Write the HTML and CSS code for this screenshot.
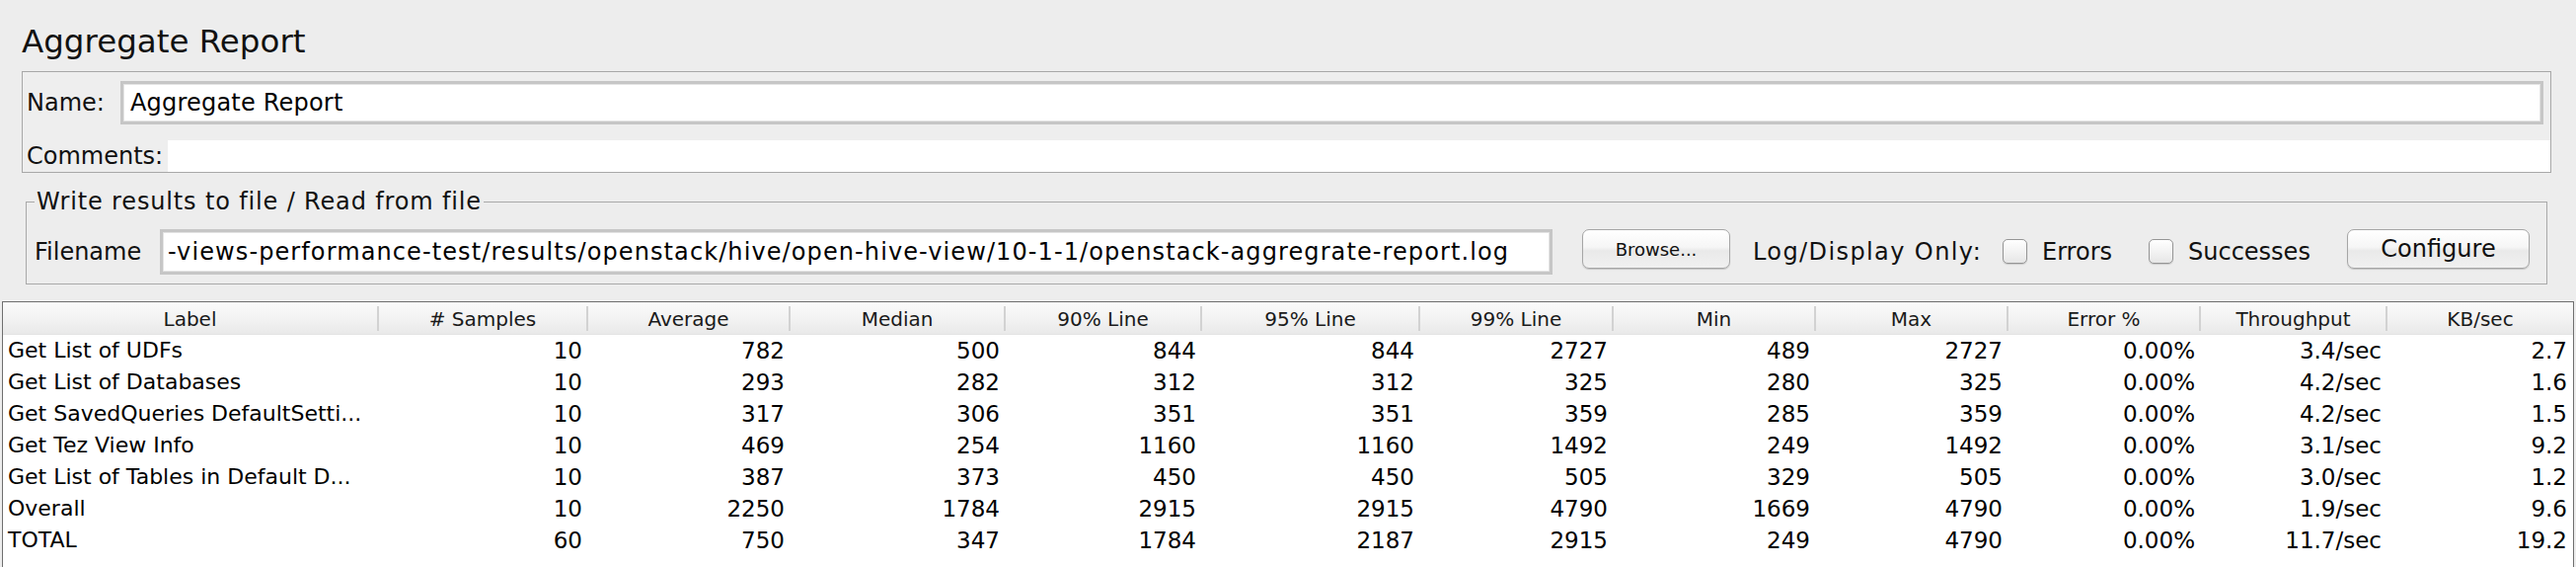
FILE: index.html
```html
<!DOCTYPE html>
<html>
<head>
<meta charset="utf-8">
<title>Aggregate Report</title>
<link rel="stylesheet" href="styles.css">
</head>
<body>
<div class="page">
  <h1 class="title">Aggregate Report</h1>

  <div class="name-panel">
    <div class="name-row">
      <span class="lbl name-lbl">Name:</span>
      <div class="text-field name-field">Aggregate Report</div>
    </div>
    <div class="comments-row">
      <span class="lbl comments-lbl">Comments:</span>
      <div class="comments-area"></div>
    </div>
  </div>

  <fieldset class="group">
    <legend class="group-title">Write results to file / Read from file</legend>
    <div class="file-row">
      <span class="lbl file-lbl">Filename</span>
      <div class="text-field file-field">-views-performance-test/results/openstack/hive/open-hive-view/10-1-1/openstack-aggregrate-report.log</div>
      <button class="btn btn-small browse">Browse...</button>
      <span class="lbl log-lbl">Log/Display Only:</span>
      <span class="check"></span>
      <span class="lbl check-lbl errors-lbl">Errors</span>
      <span class="check check-2"></span>
      <span class="lbl check-lbl">Successes</span>
      <button class="btn configure">Configure</button>
    </div>
  </fieldset>

  <div class="table">
    <div class="thead">
      <div class="th">Label</div>
      <div class="th"># Samples</div>
      <div class="th">Average</div>
      <div class="th">Median</div>
      <div class="th">90% Line</div>
      <div class="th">95% Line</div>
      <div class="th">99% Line</div>
      <div class="th">Min</div>
      <div class="th">Max</div>
      <div class="th">Error %</div>
      <div class="th">Throughput</div>
      <div class="th th-last">KB/sec</div>
    </div>
    <div class="tbody">
      <div class="tr"><div class="td td-label">Get List of UDFs</div><div class="td">10</div><div class="td">782</div><div class="td">500</div><div class="td">844</div><div class="td">844</div><div class="td">2727</div><div class="td">489</div><div class="td">2727</div><div class="td">0.00%</div><div class="td">3.4/sec</div><div class="td">2.7</div></div>
      <div class="tr"><div class="td td-label">Get List of Databases</div><div class="td">10</div><div class="td">293</div><div class="td">282</div><div class="td">312</div><div class="td">312</div><div class="td">325</div><div class="td">280</div><div class="td">325</div><div class="td">0.00%</div><div class="td">4.2/sec</div><div class="td">1.6</div></div>
      <div class="tr"><div class="td td-label">Get SavedQueries DefaultSetti...</div><div class="td">10</div><div class="td">317</div><div class="td">306</div><div class="td">351</div><div class="td">351</div><div class="td">359</div><div class="td">285</div><div class="td">359</div><div class="td">0.00%</div><div class="td">4.2/sec</div><div class="td">1.5</div></div>
      <div class="tr"><div class="td td-label">Get Tez View Info</div><div class="td">10</div><div class="td">469</div><div class="td">254</div><div class="td">1160</div><div class="td">1160</div><div class="td">1492</div><div class="td">249</div><div class="td">1492</div><div class="td">0.00%</div><div class="td">3.1/sec</div><div class="td">9.2</div></div>
      <div class="tr"><div class="td td-label">Get List of Tables in Default D...</div><div class="td">10</div><div class="td">387</div><div class="td">373</div><div class="td">450</div><div class="td">450</div><div class="td">505</div><div class="td">329</div><div class="td">505</div><div class="td">0.00%</div><div class="td">3.0/sec</div><div class="td">1.2</div></div>
      <div class="tr"><div class="td td-label">Overall</div><div class="td">10</div><div class="td">2250</div><div class="td">1784</div><div class="td">2915</div><div class="td">2915</div><div class="td">4790</div><div class="td">1669</div><div class="td">4790</div><div class="td">0.00%</div><div class="td">1.9/sec</div><div class="td">9.6</div></div>
      <div class="tr"><div class="td td-label">TOTAL</div><div class="td">60</div><div class="td">750</div><div class="td">347</div><div class="td">1784</div><div class="td">2187</div><div class="td">2915</div><div class="td">249</div><div class="td">4790</div><div class="td">0.00%</div><div class="td">11.7/sec</div><div class="td">19.2</div></div>
    </div>
  </div>
</div>
</body>
</html>
```

FILE: styles.css
```css
html, body {
  margin: 0;
  padding: 0;
  height: 100%;
}

body {
  background: #ededed;
  color: #000;
  font-family: "DejaVu Sans", "Liberation Sans", sans-serif;
  overflow: hidden;
}

.page {
  display: flex;
  flex-direction: column;
  height: 100%;
}

.title {
  margin: 0;
  padding: 24px 0 0 22px;
  font-size: 32.5px;
  font-weight: normal;
  line-height: 36px;
  color: #111;
}

/* Name / Comments panel */
.name-panel {
  margin: 12px 25px 0 22px;
  border: 1px solid #a8a8a8;
  background: #eeeeee;
  display: flex;
  flex-direction: column;
}

.lbl {
  font-size: 24px;
  color: #111;
  white-space: nowrap;
}

.name-row {
  display: flex;
  align-items: center;
  padding: 9px 7px 0 4px;
}

.name-lbl {
  width: 95px;
  flex: none;
}

.text-field {
  background: #fff;
  border: 3px solid #c6c6c6;
  box-shadow: inset 0 0 0 1px #e4e4e4;
  box-sizing: border-box;
  font-size: 24px;
  color: #000;
  white-space: nowrap;
  overflow: hidden;
  display: flex;
  align-items: center;
}

.name-field {
  flex: 1;
  height: 44px;
  padding-left: 7px;
  letter-spacing: 0.2px;
}

.comments-row {
  display: flex;
  align-items: center;
  margin-top: 16px;
  height: 32px;
  padding-left: 4px;
}

.comments-lbl {
  width: 143px;
  flex: none;
}

.comments-area {
  flex: 1;
  align-self: stretch;
  background: #fff;
}

/* Write results group */
.group {
  margin: 15px 29px 0 26px;
  padding: 0 17px 9px 8px;
  border: 1px solid #a9a9a9;
  min-width: 0;
}

.group-title {
  padding: 0 2px;
  font-size: 24px;
  letter-spacing: 0.85px;
  line-height: 28px;
  color: #111;
}

.file-row {
  display: flex;
  align-items: flex-start;
  margin-top: 14px;
}

.file-row .lbl {
  line-height: 46px;
}

.file-lbl {
  width: 127px;
  flex: none;
}

.file-field {
  flex: none;
  width: 1411px;
  height: 46px;
  padding-left: 5px;
  letter-spacing: 1.1px;
}

.btn {
  flex: none;
  height: 40px;
  border: 1px solid #a6a6a6;
  border-radius: 7px;
  background: linear-gradient(#ffffff, #f6f6f6 45%, #e9e9e9 55%, #f1f1f1);
  box-shadow: 0 1px 1px rgba(0, 0, 0, 0.18);
  font-family: "DejaVu Sans", "Liberation Sans", sans-serif;
  color: #111;
  padding: 0;
}

.btn-small {
  font-size: 18px;
}

.browse {
  width: 150px;
  margin-left: 30px;
}

.log-lbl {
  margin-left: 23px;
  width: 253px;
  flex: none;
  letter-spacing: 1.4px;
}

.check {
  flex: none;
  width: 25px;
  height: 25px;
  margin-top: 10px;
  box-sizing: border-box;
  border: 1px solid #959595;
  border-radius: 5px;
  background: linear-gradient(#ffffff, #f3f3f3 50%, #e6e6e6);
  box-shadow: 0 1px 1px rgba(0, 0, 0, 0.15);
}

.check-lbl {
  margin-left: 15px;
}

.errors-lbl {
  width: 108px;
  flex: none;
}

.configure {
  width: 185px;
  font-size: 24px;
  margin-left: auto;
}

/* Table */
.table {
  flex: 1;
  margin: 17px 2px 0 2px;
  border: 1px solid #6f6f6f;
  border-bottom: none;
  background: #fff;
  display: flex;
  flex-direction: column;
}

.thead,
.tr {
  display: grid;
  grid-template-columns: 381px 212px 205px 218px 199px 221px 196px 205px 195px 195px 189px 1fr;
}

.thead {
  height: 33px;
  background: linear-gradient(#fbfbfb, #f1f1f1 60%, #e9e9e9);
  border-bottom: 1px solid #e4e4e4;
  box-sizing: border-box;
}

.th {
  font-size: 20px;
  color: #1a1a1a;
  text-align: center;
  line-height: 26px;
  margin: 4px 0 3px;
  border-right: 2px solid #d2d2d2;
  white-space: nowrap;
  overflow: hidden;
}

.th-last {
  border-right: none;
}

.tr {
  height: 32px;
}

.td {
  font-size: 23px;
  line-height: 32px;
  text-align: right;
  padding-right: 6px;
  white-space: nowrap;
  overflow: hidden;
}

.td-label {
  font-size: 22px;
  text-align: left;
  padding: 0 0 0 5px;
}
```
